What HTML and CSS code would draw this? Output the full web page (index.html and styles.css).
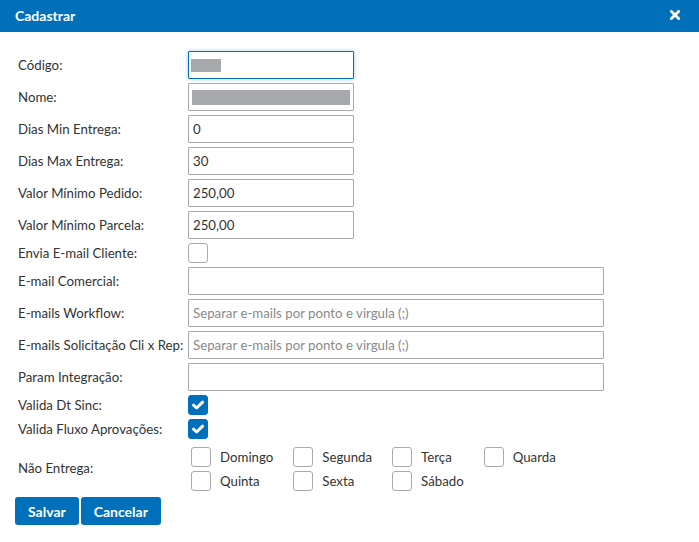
FILE: index.html
```html
<!DOCTYPE html>
<html lang="pt-BR">
<head>
<meta charset="utf-8">
<title>Cadastrar</title>
<link rel="stylesheet" href="styles.css">
</head>
<body>
<div class="dialog">
  <div class="header">
    <span class="title">Cadastrar</span>
    <svg class="close" width="10" height="10" viewBox="0 0 10 10"><path d="M1.4 1.4 L8.6 8.6 M8.6 1.4 L1.4 8.6" stroke="#fff" stroke-width="2.8" stroke-linecap="square"/></svg>
  </div>
  <div class="form">
    <div class="row"><label class="lbl">Código:</label><div class="field short focus"><span class="redact r1"></span></div></div>
    <div class="row"><label class="lbl">Nome:</label><div class="field short"><span class="redact r2"></span></div></div>
    <div class="row"><label class="lbl">Dias Min Entrega:</label><input class="field short" value="0"></div>
    <div class="row"><label class="lbl">Dias Max Entrega:</label><input class="field short" value="30"></div>
    <div class="row"><label class="lbl">Valor Mínimo Pedido:</label><input class="field short" value="250,00"></div>
    <div class="row"><label class="lbl">Valor Mínimo Parcela:</label><input class="field short" value="250,00"></div>
    <div class="row crow"><label class="lbl">Envia E-mail Cliente:</label><span class="cb"></span></div>
    <div class="row"><label class="lbl">E-mail Comercial:</label><input class="field long" value=""></div>
    <div class="row"><label class="lbl">E-mails Workflow:</label><input class="field long" placeholder="Separar e-mails por ponto e virgula (;)"></div>
    <div class="row"><label class="lbl">E-mails Solicitação Cli x Rep:</label><input class="field long" placeholder="Separar e-mails por ponto e virgula (;)"></div>
    <div class="row"><label class="lbl">Param Integração:</label><input class="field long" value=""></div>
    <div class="row crow gap1"><label class="lbl">Valida Dt Sinc:</label><span class="cb on"><svg width="20" height="20" viewBox="0 0 20 20"><path d="M5.5 10.2 L8.6 13 L14.6 7.2" fill="none" stroke="#fff" stroke-width="3" stroke-linecap="round" stroke-linejoin="round"/></svg></span></div>
    <div class="row crow"><label class="lbl">Valida Fluxo Aprovações:</label><span class="cb on"><svg width="20" height="20" viewBox="0 0 20 20"><path d="M5.5 10.2 L8.6 13 L14.6 7.2" fill="none" stroke="#fff" stroke-width="3" stroke-linecap="round" stroke-linejoin="round"/></svg></span></div>
    <div class="row drow"><label class="lbl">Não Entrega:</label>
      <div class="days">
        <span class="day"><span class="cb"></span>Domingo</span>
        <span class="day"><span class="cb"></span>Segunda</span>
        <span class="day"><span class="cb"></span>Terça</span>
        <span class="day"><span class="cb"></span>Quarda</span>
        <span class="day"><span class="cb"></span>Quinta</span>
        <span class="day"><span class="cb"></span>Sexta</span>
        <span class="day"><span class="cb"></span>Sábado</span>
      </div>
    </div>
    <div class="actions">
      <button class="btn">Salvar</button>
      <button class="btn">Cancelar</button>
    </div>
  </div>
</div>
</body>
</html>
```
FILE: styles.css
```css
* { box-sizing: border-box; }
body {
  margin: 0;
  background: #fff;
  font-family: "Lato", "Noto Sans", sans-serif;
  font-size: 13.25px;
  color: #333;
}
.header {
  height: 32px;
  background: #0070ba;
  display: flex;
  align-items: center;
  justify-content: space-between;
  padding: 0 19px 0 15px;
}
.title {
  color: #fff;
  font-weight: 700;
  font-size: 14px;
  margin-top: -2px;
}
.close { display: block; margin-top: -3px; }
.form {
  padding: 19px 15px 0 15px;
}
.row {
  display: grid;
  grid-template-columns: 170px auto;
  justify-content: start;
  align-items: center;
  padding-left: 3px;
  margin-bottom: 4px;
}
.lbl {
  white-space: nowrap;
  color: #333;
}
.field {
  display: block;
  height: 28px;
  border: 1px solid #aaa;
  border-radius: 1px;
  background: #fff;
  font: inherit;
  color: #333;
  padding: 0 4px;
  margin: 0;
  outline: none;
}
.field::placeholder { color: #8a8a8a; }
.short { width: 166px; }
.long { width: 416px; }
.focus {
  border-color: #0070ba;
  box-shadow: 0 0 4px rgba(0, 112, 186, 0.35);
}
div.field { display: flex; align-items: center; padding: 0 2px; }
.redact { display: block; background: #a7a8ab; }
.r1 { width: 30px; height: 13px; }
.r2 { width: 158px; height: 15px; margin-left: 1px; }
.cb {
  display: block;
  width: 20px;
  height: 20px;
  border: 1px solid #aaa;
  border-radius: 3px;
  background: #fff;
}
.cb.on {
  background: #0070ba;
  border-color: #0070ba;
}
.cb.on svg { display: block; margin: -1px; }
.gap1 { margin-top: 1px; }
.days {
  display: grid;
  grid-template-columns: repeat(4, auto);
  justify-content: start;
  column-gap: 20px;
  row-gap: 4px;
  padding: 4px 0 2px 3px;
}
.day {
  display: flex;
  align-items: center;
  gap: 9px;
  white-space: nowrap;
}
.actions {
  display: flex;
  gap: 2px;
}
.btn {
  height: 28px;
  background: #0070ba;
  color: #fff;
  border: none;
  border-radius: 3px;
  font-family: inherit;
  font-size: 14px;
  font-weight: 700;
  padding: 0 13px;
  margin: 0;
}
```
